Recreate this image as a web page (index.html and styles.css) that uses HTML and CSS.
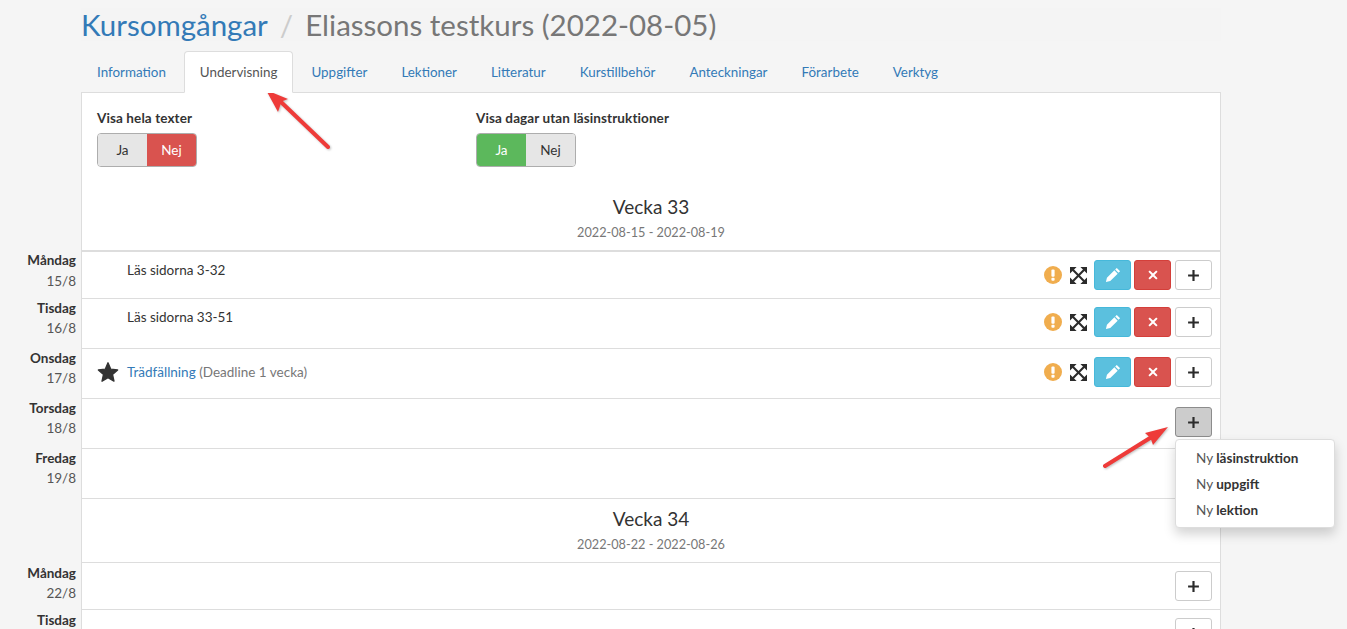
FILE: index.html
```html
<!DOCTYPE html>
<html lang="sv">
<head>
<meta charset="utf-8">
<title>Eliassons testkurs</title>
<link rel="stylesheet" href="styles.css">
</head>
<body>
<div class="page">
  <div class="main">
    <h1 class="crumbs"><a href="#">Kursomgångar</a><span class="sep">/</span><span class="cur">Eliassons testkurs (2022-08-05)</span></h1>
    <nav class="tabs">
      <a class="tab" href="#">Information</a>
      <a class="tab active" href="#">Undervisning</a>
      <a class="tab" href="#">Uppgifter</a>
      <a class="tab" href="#">Lektioner</a>
      <a class="tab" href="#">Litteratur</a>
      <a class="tab" href="#">Kurstillbehör</a>
      <a class="tab" href="#">Anteckningar</a>
      <a class="tab" href="#">Förarbete</a>
      <a class="tab" href="#">Verktyg</a>
    </nav>
  </div>
  <div class="panel-top">
    <div class="toggles">
      <div class="toggle-group">
        <div class="toggle-label">Visa hela texter</div>
        <div class="toggle"><span class="opt">Ja</span><span class="opt red">Nej</span></div>
      </div>
      <div class="toggle-group">
        <div class="toggle-label">Visa dagar utan läsinstruktioner</div>
        <div class="toggle"><span class="opt green">Ja</span><span class="opt">Nej</span></div>
      </div>
    </div>
    <div class="week first"><h2>Vecka 33</h2><p>2022-08-15 - 2022-08-19</p></div>
  </div>

  <div class="row r48 thick">
    <div class="day"><b>Måndag</b><span>15/8</span></div>
    <div class="cell"><div class="text">Läs sidorna 3-32</div>
      <div class="actions">
        <svg class="warn" viewBox="0 0 18 18"><circle cx="9" cy="9" r="9" fill="#f0ad4e"/><rect x="7.4" y="3.400" width="3.200" height="7.400" rx="1" fill="#fff"/><rect x="7.400" y="11.800" width="3.200" height="3" rx="1" fill="#fff"/></svg>
        <svg class="expand" viewBox="0 0 18 18"><path d="M0 0h7L0 7zM18 0v7l-7-7zM18 18h-7l7-7zM0 18v-7l7 7z" fill="#2b2b2b"/><path d="M3 3l12 12M15 3L3 15" stroke="#2b2b2b" stroke-width="2.200"/></svg>
        <button class="btn info"><svg viewBox="0 0 14 14"><path d="M10.300.8l2.900 2.900-1.400 1.400-2.900-2.900zM8.200 2.900l2.900 2.900-6.500 6.500-3.800.9.900-3.800z" fill="#fff"/></svg></button>
        <button class="btn danger"><svg viewBox="0 0 12 12"><path d="M2.800 1.400L6 4.600l3.200-3.200 1.400 1.400L7.400 6l3.200 3.200-1.400 1.400L6 7.400l-3.200 3.200-1.400-1.400L4.600 6 1.400 2.800z" fill="#fff"/></svg></button>
        <button class="btn plus"><svg viewBox="0 0 12 12"><path d="M5 1h2v4h4v2H7v4H5V7H1V5h4z" fill="#2b2b2b"/></svg></button>
      </div>
    </div>
  </div>
  <div class="row r50">
    <div class="day"><b>Tisdag</b><span>16/8</span></div>
    <div class="cell"><div class="text">Läs sidorna 33-51</div>
      <div class="actions">
        <svg class="warn" viewBox="0 0 18 18"><circle cx="9" cy="9" r="9" fill="#f0ad4e"/><rect x="7.4" y="3.400" width="3.200" height="7.400" rx="1" fill="#fff"/><rect x="7.400" y="11.800" width="3.200" height="3" rx="1" fill="#fff"/></svg>
        <svg class="expand" viewBox="0 0 18 18"><path d="M0 0h7L0 7zM18 0v7l-7-7zM18 18h-7l7-7zM0 18v-7l7 7z" fill="#2b2b2b"/><path d="M3 3l12 12M15 3L3 15" stroke="#2b2b2b" stroke-width="2.200"/></svg>
        <button class="btn info"><svg viewBox="0 0 14 14"><path d="M10.300.8l2.900 2.900-1.400 1.400-2.900-2.900zM8.200 2.900l2.900 2.900-6.500 6.500-3.800.9.900-3.800z" fill="#fff"/></svg></button>
        <button class="btn danger"><svg viewBox="0 0 12 12"><path d="M2.800 1.400L6 4.600l3.200-3.200 1.400 1.400L7.400 6l3.200 3.200-1.400 1.400L6 7.400l-3.200 3.200-1.400-1.400L4.600 6 1.400 2.800z" fill="#fff"/></svg></button>
        <button class="btn plus"><svg viewBox="0 0 12 12"><path d="M5 1h2v4h4v2H7v4H5V7H1V5h4z" fill="#2b2b2b"/></svg></button>
      </div>
    </div>
  </div>
  <div class="row r50">
    <div class="day"><b>Onsdag</b><span>17/8</span></div>
    <div class="cell center">
      <svg class="star" viewBox="0 0 24 24"><path d="M12 2l3 6.900 7.500.8-5.600 5 1.600 7.300L12 18.300 5.500 22l1.600-7.300-5.600-5 7.500-.8z" fill="#333" stroke="#333" stroke-width="1.500" stroke-linejoin="round"/></svg>
      <div class="text mid"><a href="#">Trädfällning</a> <span class="muted">(Deadline 1 vecka)</span></div>
      <div class="actions">
        <svg class="warn" viewBox="0 0 18 18"><circle cx="9" cy="9" r="9" fill="#f0ad4e"/><rect x="7.4" y="3.400" width="3.200" height="7.400" rx="1" fill="#fff"/><rect x="7.400" y="11.800" width="3.200" height="3" rx="1" fill="#fff"/></svg>
        <svg class="expand" viewBox="0 0 18 18"><path d="M0 0h7L0 7zM18 0v7l-7-7zM18 18h-7l7-7zM0 18v-7l7 7z" fill="#2b2b2b"/><path d="M3 3l12 12M15 3L3 15" stroke="#2b2b2b" stroke-width="2.200"/></svg>
        <button class="btn info"><svg viewBox="0 0 14 14"><path d="M10.300.8l2.900 2.900-1.400 1.400-2.900-2.900zM8.200 2.900l2.900 2.900-6.500 6.500-3.800.9.900-3.800z" fill="#fff"/></svg></button>
        <button class="btn danger"><svg viewBox="0 0 12 12"><path d="M2.800 1.400L6 4.600l3.200-3.200 1.400 1.400L7.400 6l3.200 3.200-1.400 1.400L6 7.400l-3.200 3.200-1.400-1.400L4.600 6 1.400 2.800z" fill="#fff"/></svg></button>
        <button class="btn plus"><svg viewBox="0 0 12 12"><path d="M5 1h2v4h4v2H7v4H5V7H1V5h4z" fill="#2b2b2b"/></svg></button>
      </div>
    </div>
  </div>
  <div class="row r50">
    <div class="day"><b>Torsdag</b><span>18/8</span></div>
    <div class="cell"><div class="text"></div>
      <div class="actions"><button class="btn plus open"><svg viewBox="0 0 12 12"><path d="M5 1h2v4h4v2H7v4H5V7H1V5h4z" fill="#2b2b2b"/></svg></button></div>
    </div>
  </div>
  <div class="row r50">
    <div class="day"><b>Fredag</b><span>19/8</span></div>
    <div class="cell"><div class="text"></div>
      <div class="actions"><button class="btn plus"><svg viewBox="0 0 12 12"><path d="M5 1h2v4h4v2H7v4H5V7H1V5h4z" fill="#2b2b2b"/></svg></button></div>
    </div>
  </div>
  <div class="row week-row">
    <div class="day"></div>
    <div class="cell block"><div class="week"><h2>Vecka 34</h2><p>2022-08-22 - 2022-08-26</p></div></div>
  </div>
  <div class="row r47">
    <div class="day"><b>Måndag</b><span>22/8</span></div>
    <div class="cell"><div class="text"></div>
      <div class="actions"><button class="btn plus"><svg viewBox="0 0 12 12"><path d="M5 1h2v4h4v2H7v4H5V7H1V5h4z" fill="#2b2b2b"/></svg></button></div>
    </div>
  </div>
  <div class="row r47">
    <div class="day"><b>Tisdag</b><span>23/8</span></div>
    <div class="cell"><div class="text"></div>
      <div class="actions"><button class="btn plus"><svg viewBox="0 0 12 12"><path d="M5 1h2v4h4v2H7v4H5V7H1V5h4z" fill="#2b2b2b"/></svg></button></div>
    </div>
  </div>

  <ul class="menu">
    <li>Ny <b>läsinstruktion</b></li>
    <li>Ny <b>uppgift</b></li>
    <li>Ny <b>lektion</b></li>
  </ul>
  <svg class="arrow arrow-a" viewBox="0 0 70 62"><path d="M64 59L17 14" stroke="#ee3b39" stroke-width="4" stroke-linecap="round"/><path d="M2 2l22 9-6.500 2.500L14 24z" fill="#ee3b39"/></svg>
  <svg class="arrow arrow-b" viewBox="0 0 72 48"><path d="M5 42L50 14" stroke="#ee3b39" stroke-width="4" stroke-linecap="round"/><path d="M68 3L53 21l-2.500-7-5.500-5z" fill="#ee3b39"/></svg>
</div>
</body>
</html>
```
FILE: styles.css
```css
* { box-sizing: border-box; }
html, body { margin: 0; height: 629px; overflow: hidden; }
body { background: #f5f5f5; color: #333; font-family: "Lato", "Liberation Sans", sans-serif; font-size: 13.500px; }
a { color: #337ab7; text-decoration: none; }
.page { position: relative; width: 1347px; height: 629px; overflow: hidden; }
.main { margin-left: 81px; width: 1140px; }
.crumbs { margin: 8px 0 10px; height: 33px; background: #f4f4f4; font-size: 29.500px; font-weight: 400; line-height: 33px; white-space: nowrap; }
.crumbs a { color: #337ab7; }
.sep { color: #ccc; margin: 0 12px; }
.cur { color: #777; }
.tabs { display: flex; height: 42px; }
.tab { height: 42px; padding: 12px 15px 0; line-height: 16px; font-size: 13.400px; margin-right: 2px; border: 1px solid transparent; border-radius: 4px 4px 0 0; color: #337ab7; white-space: nowrap; }
.tab.active { position: relative; z-index: 1; color: #555; background: #fff; border-color: #ddd #ddd #fff; }
.panel-top { margin-left: 81px; width: 1140px; height: 158px; margin-top: -1px; background: #fff; border: 1px solid #ddd; border-bottom: 0; }
.toggles { display: flex; padding: 17px 0 0 15px; height: 95px; }
.toggle-group { width: 379px; }
.toggle-label { font-weight: 700; font-size: 13.500px; letter-spacing: .1px; line-height: 16px; margin-bottom: 7px; white-space: nowrap; }
.toggle { display: inline-flex; height: 34px; border: 1px solid #adadad; border-radius: 4px; overflow: hidden; }
.opt { display: block; width: 49px; text-align: center; line-height: 32px; background: #e6e6e6; color: #333; font-size: 13.500px; }
.opt.red { background: #d9534f; border-color: #d43f3a; color: #fff; }
.opt.green { background: #5cb85c; color: #fff; }
.week { text-align: center; }
.week h2 { margin: 0; font-size: 19px; font-weight: 400; line-height: 24px; color: #333; }
.week p { margin: 5px 0 0; font-size: 12.700px; line-height: 16px; color: #777; }
.week.first { padding-top: 7px; }
.row { display: flex; }
.day { width: 76px; margin-right: 5px; padding-top: 0; text-align: right; font-size: 13.500px; line-height: 20px; flex: none; }
.day b, .day span { display: block; }
.day span { color: #555; }
.cell { width: 1140px; flex: none; display: flex; background: #fff; border-left: 1px solid #ddd; border-right: 1px solid #ddd; border-top: 1px solid #ddd; padding: 8px 8px 0 45px; position: relative; }
.cell.block { display: block; padding: 8px 0 0; }
.r48 { height: 48px; }
.r50 { height: 50px; }
.r47 { height: 47px; }
.week-row { height: 64px; }
.thick .cell { border-top: 2px solid #ddd; }
.thick .day span { margin-top: 1px; }
.r47 .day { padding-top: 1px; }
.text { flex: 1; line-height: 20px; margin-top: 0; }
.text.mid { margin-top: 5px; }
.cell.center { padding-left: 15px; }
.star { width: 22px; height: 22px; margin: 4px 8px 0 0; flex: none; }
.muted { color: #777; }
.actions { display: flex; align-items: center; height: 30px; flex: none; }
.warn { width: 18px; height: 18px; margin-right: 8px; }
.expand { width: 17px; height: 17px; margin-right: 7px; }
.btn { width: 37px; height: 30px; padding: 0; border: 1px solid #ccc; border-radius: 3px; display: flex; align-items: center; justify-content: center; background: #fff; }
.btn svg { width: 13px; height: 13px; }
.btn.info { background: #5bc0de; border-color: #46b8da; margin-right: 3px; }
.btn.info svg { width: 16px; height: 16px; }
.btn.danger { background: #d9534f; border-color: #d43f3a; margin-right: 4px; }
.btn.danger svg { width: 12px; height: 12px; }
.btn.open { background: #ccc; border-color: #8c8c8c; }
.menu { position: absolute; left: 1175px; top: 439px; width: 160px; height: 89px; margin: 0; padding: 5px 0; list-style: none; background: #fff; border: 1px solid #ddd; border-radius: 4px; box-shadow: 0 6px 12px rgba(0,0,0,.175); }
.menu li { height: 26px; line-height: 26px; padding-left: 20px; color: #555; font-size: 13.500px; }
.menu b { color: #333; }
.arrow { position: absolute; filter: drop-shadow(1px 1px 1px rgba(0,0,0,.25)); }
.arrow-a { left: 264px; top: 88px; width: 70px; height: 62px; }
.arrow-b { left: 1100px; top: 424px; width: 72px; height: 48px; }
```
